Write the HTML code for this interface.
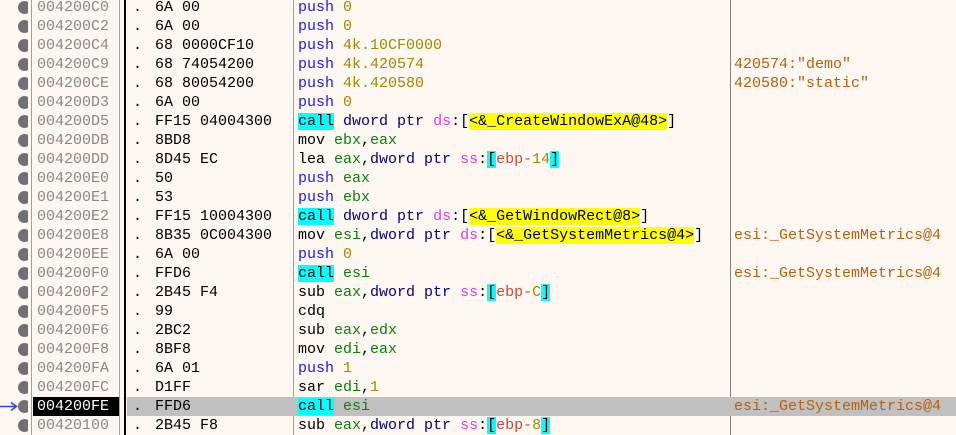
<!DOCTYPE html>
<html><head><meta charset="utf-8"><style>
body{margin:0;width:956px;height:435px;background:#fdf7f1;overflow:hidden;position:relative;font-family:"Liberation Mono",monospace;font-size:15px}
.r{position:absolute;left:0;width:956px;height:19px;line-height:19px;white-space:pre}
.r span{white-space:pre}
.a{position:absolute;left:37px;color:#888}
.d{position:absolute;left:133px;color:#000}
.b{position:absolute;left:155px;color:#000}
.m{position:absolute;left:298px;color:#000}
.c{position:absolute;left:734px;color:#b8600c}
.ic{position:absolute;left:18px;top:3px;width:10px;height:13px;overflow:hidden}
.ic i{display:block;width:13px;height:13px;border-radius:50%;background:#707070}
.p{color:#1c1cf0}.k{background:#00ffff}.g{color:#0a820a}.n{color:#a08a00}.dp{color:#000080}.s{color:#e040e0}.cy{background:#00ffff}.e{color:#c84a3c}.y{background:#ffff00}
.v{position:absolute;top:0;height:435px}
</style></head><body>
<div class="v" style="left:31px;width:1px;background:#a0a0a0"></div>
<div class="v" style="left:119px;width:1px;background:#a0a0a0"></div>
<div class="v" style="left:293px;width:1px;background:#a0a0a0"></div>
<div class="v" style="left:730px;width:1px;background:#808080"></div>

<div class="r" style="top:-2px"><div class="ic"><i></i></div><span class="a">004200C0</span><span class="d">.</span><span class="b">6A 00</span><span class="m"><span class="p">push</span> <span class="n">0</span></span></div>
<div class="r" style="top:17px"><div class="ic"><i></i></div><span class="a">004200C2</span><span class="d">.</span><span class="b">6A 00</span><span class="m"><span class="p">push</span> <span class="n">0</span></span></div>
<div class="r" style="top:36px"><div class="ic"><i></i></div><span class="a">004200C4</span><span class="d">.</span><span class="b">68 0000CF10</span><span class="m"><span class="p">push</span> <span class="n">4k.10CF0000</span></span></div>
<div class="r" style="top:55px"><div class="ic"><i></i></div><span class="a">004200C9</span><span class="d">.</span><span class="b">68 74054200</span><span class="m"><span class="p">push</span> <span class="n">4k.420574</span></span><span class="c">420574:"demo"</span></div>
<div class="r" style="top:74px"><div class="ic"><i></i></div><span class="a">004200CE</span><span class="d">.</span><span class="b">68 80054200</span><span class="m"><span class="p">push</span> <span class="n">4k.420580</span></span><span class="c">420580:"static"</span></div>
<div class="r" style="top:93px"><div class="ic"><i></i></div><span class="a">004200D3</span><span class="d">.</span><span class="b">6A 00</span><span class="m"><span class="p">push</span> <span class="n">0</span></span></div>
<div class="r" style="top:112px"><div class="ic"><i></i></div><span class="a">004200D5</span><span class="d">.</span><span class="b">FF15 04004300</span><span class="m"><span class="k">call</span> <span class="dp">dword ptr</span> <span class="s">ds</span>:[<span class="y">&lt;&amp;_CreateWindowExA@48&gt;</span>]</span></div>
<div class="r" style="top:131px"><div class="ic"><i></i></div><span class="a">004200DB</span><span class="d">.</span><span class="b">8BD8</span><span class="m">mov <span class="g">ebx</span>,<span class="g">eax</span></span></div>
<div class="r" style="top:150px"><div class="ic"><i></i></div><span class="a">004200DD</span><span class="d">.</span><span class="b">8D45 EC</span><span class="m">lea <span class="g">eax</span>,<span class="dp">dword ptr</span> <span class="s">ss</span>:<span class="cy">[</span><span class="e">ebp-</span><span class="n">14</span><span class="cy">]</span></span></div>
<div class="r" style="top:169px"><div class="ic"><i></i></div><span class="a">004200E0</span><span class="d">.</span><span class="b">50</span><span class="m"><span class="p">push</span> <span class="g">eax</span></span></div>
<div class="r" style="top:188px"><div class="ic"><i></i></div><span class="a">004200E1</span><span class="d">.</span><span class="b">53</span><span class="m"><span class="p">push</span> <span class="g">ebx</span></span></div>
<div class="r" style="top:207px"><div class="ic"><i></i></div><span class="a">004200E2</span><span class="d">.</span><span class="b">FF15 10004300</span><span class="m"><span class="k">call</span> <span class="dp">dword ptr</span> <span class="s">ds</span>:[<span class="y">&lt;&amp;_GetWindowRect@8&gt;</span>]</span></div>
<div class="r" style="top:226px"><div class="ic"><i></i></div><span class="a">004200E8</span><span class="d">.</span><span class="b">8B35 0C004300</span><span class="m">mov <span class="g">esi</span>,<span class="dp">dword ptr</span> <span class="s">ds</span>:[<span class="y">&lt;&amp;_GetSystemMetrics@4&gt;</span>]</span><span class="c">esi:_GetSystemMetrics@4</span></div>
<div class="r" style="top:245px"><div class="ic"><i></i></div><span class="a">004200EE</span><span class="d">.</span><span class="b">6A 00</span><span class="m"><span class="p">push</span> <span class="n">0</span></span></div>
<div class="r" style="top:264px"><div class="ic"><i></i></div><span class="a">004200F0</span><span class="d">.</span><span class="b">FFD6</span><span class="m"><span class="k">call</span> <span class="g">esi</span></span><span class="c">esi:_GetSystemMetrics@4</span></div>
<div class="r" style="top:283px"><div class="ic"><i></i></div><span class="a">004200F2</span><span class="d">.</span><span class="b">2B45 F4</span><span class="m">sub <span class="g">eax</span>,<span class="dp">dword ptr</span> <span class="s">ss</span>:<span class="cy">[</span><span class="e">ebp-</span><span class="n">C</span><span class="cy">]</span></span></div>
<div class="r" style="top:302px"><div class="ic"><i></i></div><span class="a">004200F5</span><span class="d">.</span><span class="b">99</span><span class="m">cdq</span></div>
<div class="r" style="top:321px"><div class="ic"><i></i></div><span class="a">004200F6</span><span class="d">.</span><span class="b">2BC2</span><span class="m">sub <span class="g">eax</span>,<span class="g">edx</span></span></div>
<div class="r" style="top:340px"><div class="ic"><i></i></div><span class="a">004200F8</span><span class="d">.</span><span class="b">8BF8</span><span class="m">mov <span class="g">edi</span>,<span class="g">eax</span></span></div>
<div class="r" style="top:359px"><div class="ic"><i></i></div><span class="a">004200FA</span><span class="d">.</span><span class="b">6A 01</span><span class="m"><span class="p">push</span> <span class="n">1</span></span></div>
<div class="r" style="top:378px"><div class="ic"><i></i></div><span class="a">004200FC</span><span class="d">.</span><span class="b">D1FF</span><span class="m">sar <span class="g">edi</span>,<span class="n">1</span></span></div>
<div class="r" style="top:397px"><div style="position:absolute;left:127px;right:0;top:0;height:19px;background:#c0c0c0"></div><div style="position:absolute;left:33px;width:86px;top:0;height:19px;background:#000"></div><div class="ic"><i></i></div><span class="a" style="color:#fff">004200FE</span><span class="d">.</span><span class="b">FFD6</span><span class="m"><span class="k">call</span> <span class="g">esi</span></span><span class="c">esi:_GetSystemMetrics@4</span>
<svg style="position:absolute;left:0;top:0" width="20" height="19"><path d="M0 9.5H16" stroke="#3a3af0" stroke-width="1.5"/><path d="M11 5.5L16.5 9.5L11 13.5" stroke="#3a3af0" stroke-width="1.5" fill="none"/></svg></div>
<div class="r" style="top:416px"><div class="ic"><i></i></div><span class="a">00420100</span><span class="d">.</span><span class="b">2B45 F8</span><span class="m">sub <span class="g">eax</span>,<span class="dp">dword ptr</span> <span class="s">ss</span>:<span class="cy">[</span><span class="e">ebp-</span><span class="n">8</span><span class="cy">]</span></span></div>

<div class="v" style="left:124px;width:2px;background:#000"></div>
</body></html>
